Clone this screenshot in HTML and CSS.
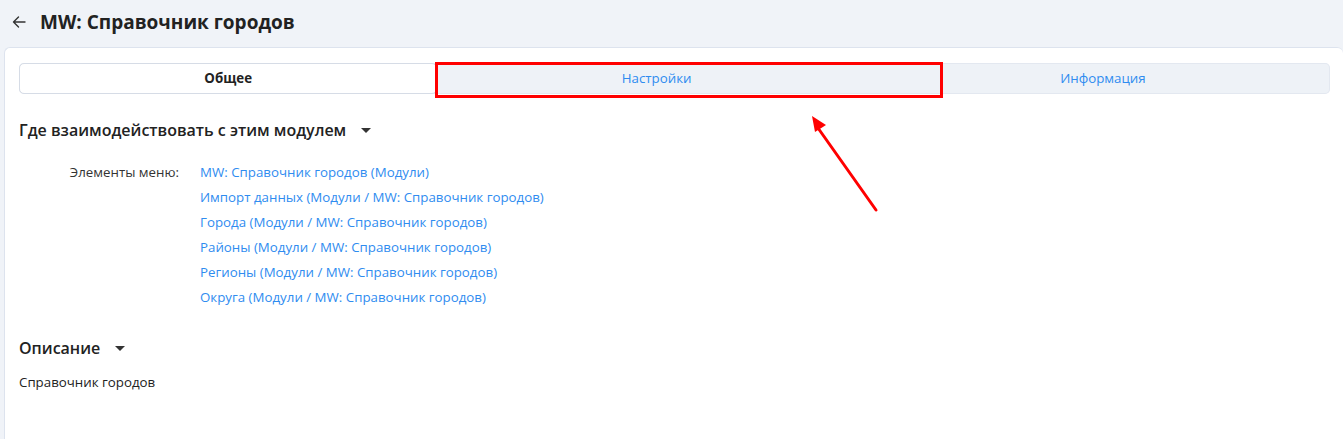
FILE: index.html
```html
<!DOCTYPE html>
<html lang="ru">
<head>
  <meta charset="UTF-8">
  <title>MW: Справочник городов</title>
  <link rel="stylesheet" href="styles.css">
</head>
<body>

  <header class="page-head">
    <a class="back" href="#">
      <svg width="14" height="12" viewBox="0 0 14 12" fill="none" stroke="#333" stroke-width="1.4" stroke-linecap="round" stroke-linejoin="round">
        <path d="M13 6H1.5M6.5 1L1.5 6l5 5"/>
      </svg>
    </a>
    <h1>MW: Справочник городов</h1>
  </header>

  <main class="card">
    <nav class="tabs">
      <a class="tab active" href="#">Общее</a>
      <a class="tab" href="#">Настройки</a>
      <a class="tab" href="#">Информация</a>
    </nav>

    <section class="block">
      <h2>Где взаимодействовать с этим модулем <span class="caret"></span></h2>
      <div class="field">
        <div class="field-label">Элементы меню:</div>
        <ul class="links">
          <li><a href="#">MW: Справочник городов (Модули)</a></li>
          <li><a href="#">Импорт данных (Модули / MW: Справочник городов)</a></li>
          <li><a href="#">Города (Модули / MW: Справочник городов)</a></li>
          <li><a href="#">Районы (Модули / MW: Справочник городов)</a></li>
          <li><a href="#">Регионы (Модули / MW: Справочник городов)</a></li>
          <li><a href="#">Округа (Модули / MW: Справочник городов)</a></li>
        </ul>
      </div>
    </section>

    <section class="block">
      <h2>Описание <span class="caret"></span></h2>
      <p class="desc">Справочник городов</p>
    </section>

    <!-- annotation -->
    <div class="mark-box"></div>
    <svg class="mark-arrow" width="80" height="110" viewBox="0 0 80 110">
      <path d="M72 102L14 20" stroke="#f00" stroke-width="3" stroke-linecap="round"/>
      <path d="M8 8L22 17L11 24Z" fill="#f00"/>
    </svg>
  </main>

</body>
</html>
```

FILE: styles.css
```css
* {
  box-sizing: border-box;
  margin: 0;
  padding: 0;
}

body {
  background: #f0f3f8;
  font-family: 'Open Sans', 'Noto Sans', sans-serif;
  color: #222;
  height: 439px;
  overflow: hidden;
}

.page-head {
  display: flex;
  align-items: center;
  height: 47px;
  padding: 0 0 4px 12px;
}

.back {
  display: flex;
  width: 28px;
}

.page-head h1 {
  font-size: 19px;
  font-weight: 700;
  color: #222;
}

.card {
  position: relative;
  margin-left: 4px;
  background: #fff;
  border: 1px solid #dde3ee;
  border-right: none;
  border-bottom: none;
  border-radius: 6px 6px 0 0;
  min-height: 392px;
  padding: 15px 13px 0 14px;
}

.tabs {
  display: flex;
  background: #eef2f7;
  border-radius: 5px;
  height: 31px;
  box-shadow: inset 0 0 0 1px #e3e8f0;
}

.tab {
  flex: 1 1 auto;
  display: flex;
  align-items: center;
  justify-content: center;
  padding-bottom: 2px;
  font-size: 13.3px;
  color: #2f8cf0;
  text-decoration: none;
}

.tab.active {
  background: #fff;
  color: #222;
  font-weight: 700;
  border: 1px solid #d6dce6;
  border-radius: 5px;
}

.block {
  margin-top: 25px;
}

.block + .block {
  margin-top: 27px;
}

.block h2 {
  display: flex;
  align-items: center;
  font-size: 16px;
  font-weight: 600;
  color: #222;
}

.caret {
  display: inline-block;
  margin-left: 15px;
  border-left: 5px solid transparent;
  border-right: 5px solid transparent;
  border-top: 5px solid #333;
}

.field {
  display: flex;
  margin-top: 19px;
  font-size: 13.3px;
}

.field-label {
  width: 181px;
  text-align: right;
  color: #333;
  line-height: 25px;
  padding-right: 21px;
}

.links {
  list-style: none;
}

.links li {
  line-height: 25px;
}

.links a {
  color: #2f8cf0;
  text-decoration: none;
}

.desc {
  margin-top: 14px;
  font-size: 13.3px;
  color: #222;
}

.mark-box {
  position: absolute;
  left: 430px;
  top: 14px;
  width: 508px;
  height: 36px;
  border: 3px solid #f00;
}

.mark-arrow {
  position: absolute;
  left: 799px;
  top: 60px;
}
```
